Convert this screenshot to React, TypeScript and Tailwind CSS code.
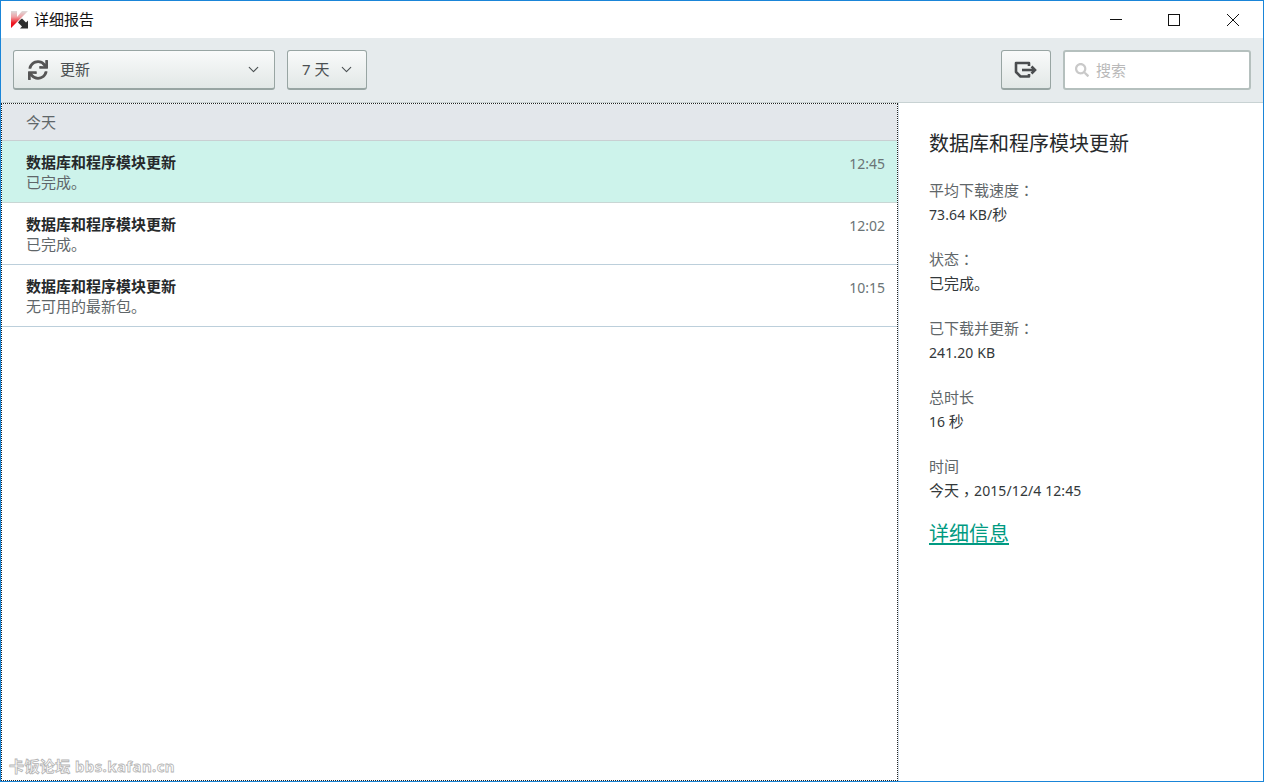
import { ChevronDown } from "lucide-react";
import { FaSearch, FaSync } from "react-icons/fa";

const fontStack = "font-['Noto_Sans','Noto_Sans_CJK_SC',sans-serif]";
const buttonClass =
  "flex items-center rounded-[3px] border border-[#98a5a3] border-b-2 bg-gradient-to-b from-[#f9fafa] to-[#e2e8e7] text-[#4b5052]";

const rows = [
  { title: "数据库和程序模块更新", status: "已完成。", time: "12:45", active: true },
  { title: "数据库和程序模块更新", status: "已完成。", time: "12:02", active: false },
  { title: "数据库和程序模块更新", status: "无可用的最新包。", time: "10:15", active: false },
];

// the colon and comma sit centred in their cell in the original, which the TC glyphs do
const Colon = () => <span className="font-['Noto_Sans_CJK_TC',sans-serif]">：</span>;
const Comma = () => <span className="align-[-4px] font-['Noto_Sans_CJK_TC',sans-serif] leading-none">，</span>;

const details = [
  { label: <>平均下载速度<Colon /></>, value: <><span className="text-sm tracking-[0.1px]">73.64 KB/</span>秒</> },
  { label: <>状态<Colon /></>, value: <>已完成。</> },
  { label: <>已下载并更新<Colon /></>, value: <span className="text-sm tracking-[0.1px]">241.20 KB</span> },
  { label: <>总时长</>, value: <><span className="text-sm">16 </span>秒</> },
  { label: <>时间</>, value: <>今天<Comma /><span className="text-sm tracking-[0.1px]">2015/12/4 12:45</span></> },
];

function Logo() {
  return (
    <svg width="18" height="18" viewBox="0 0 18 18">
      <defs>
        <linearGradient id="k" x1="0" y1="0" x2="0" y2="1">
          <stop offset="0" stopColor="#dcdcdc" />
          <stop offset="0.35" stopColor="#f0a0a4" />
          <stop offset="0.7" stopColor="#ee1c25" />
          <stop offset="1" stopColor="#e8000f" />
        </linearGradient>
      </defs>
      <path d="M0 0h6v6l5-6h6l-7 7-4 4-6 6z" fill="url(#k)" />
      <path d="M9 9l2-1.500 4 4 2-2v8h-8l2-2-4-4z" fill="#2e2e2e" />
    </svg>
  );
}

function ExportIcon() {
  return (
    <svg width="24" height="18" viewBox="0 0 24 18" fill="none" stroke="#4a4d4f" strokeWidth="2.6">
      <path d="M15 5V2H2v9l4.500 4.500H15V13" strokeLinejoin="round" />
      <path d="M8 9h13" />
      <path d="M17.500 5.500 21 9l-3.500 3.500" />
    </svg>
  );
}

export default function App() {
  return (
    <div className={`${fontStack} relative flex h-[782px] w-[1264px] flex-col overflow-hidden border border-[#1a85d8] bg-white`}>
      <header className="flex h-[37px] shrink-0 items-center bg-white pl-[10px]">
        <Logo />
        <span className="ml-[5px] text-[15px] text-[#111]">详细报告</span>
        <div className="ml-auto flex items-center text-[#111]">
          <button className="flex w-[58px] justify-center">
            <svg width="12" height="12" viewBox="0 0 12 12" stroke="currentColor"><path d="M0 5.500h12" /></svg>
          </button>
          <button className="flex w-[58px] justify-center">
            <svg width="12" height="12" viewBox="0 0 12 12" fill="none" stroke="currentColor"><rect x="0.500" y="0.500" width="11" height="11" /></svg>
          </button>
          <button className="flex w-[60px] justify-center">
            <svg width="12" height="12" viewBox="0 0 12 12" stroke="currentColor"><path d="M0 0l12 12M12 0 0 12" /></svg>
          </button>
        </div>
      </header>

      <div className="flex h-[65px] shrink-0 items-center border-b border-[#c8d2d3] bg-[#e6ebed] pl-3 pr-3">
        <button className={`${buttonClass} h-[40px] w-[262px] pl-[14px] pr-[12px] text-[15px]`}>
          <FaSync size={20} color="#555" />
          <span className="ml-[12px]">更新</span>
          <ChevronDown size={17} strokeWidth={1.5} className="ml-auto" />
        </button>
        <button className={`${buttonClass} ml-3 h-[40px] w-[80px] pl-[14px] text-[15px]`}>
          <span>7 天</span>
          <ChevronDown size={17} strokeWidth={1.5} className="ml-[9px]" />
        </button>
        <button className={`${buttonClass} ml-auto h-[40px] w-[50px] justify-center`}>
          <ExportIcon />
        </button>
        <div className="ml-3 flex h-[40px] w-[188px] items-center rounded-[3px] border-2 border-[#b5c0be] bg-white pl-[10px]">
          <FaSearch size={14} color="#c9c9c9" />
          <span className="ml-[7px] text-[15px] text-[#b9b9b9]">搜索</span>
        </div>
      </div>

      <div className="flex min-h-0 flex-1">
        <div className="w-[897px] border border-dotted border-[#222]">
          <div className="flex h-[37px] items-center border-b border-[#c9cfd2] bg-[#e3e7eb] pl-6 pt-[1px] text-[15px] text-[#5f6669]">今天</div>
          {rows.map((row, i) => (
            <div
              key={i}
              className={`flex h-[62px] justify-between border-b pl-6 pr-3 pt-[11px] ${
                row.active ? "border-[#c9d6d4] bg-[#cdf3eb]" : "border-[#bccfdb] bg-white"
              }`}
            >
              <div className="text-[15px] leading-[20px]">
                <div className="font-bold text-[#26292b]">{row.title}</div>
                <div className="text-[#5f6669]">{row.status}</div>
              </div>
              <div className="text-sm leading-[24px] text-[#6b7476]">{row.time}</div>
            </div>
          ))}
        </div>

        <aside className="flex-1 border-l border-[#d5e0e8] pl-[30px] pt-[26px]">
          <h2 className="text-[20px] leading-[30px] text-[#26292b]">数据库和程序模块更新</h2>
          <div className="mt-[19px] flex flex-col gap-[21px]">
            {details.map((item, i) => (
              <div key={i} className="text-[15px] leading-[24px]">
                <div className="text-[#5f6669]">{item.label}</div>
                <div className="text-[#33383a]">{item.value}</div>
              </div>
            ))}
          </div>
          <a href="#" className="mt-[17px] block text-[20px] leading-[30px] text-[#009a82] underline underline-offset-2">详细信息</a>
        </aside>
      </div>

      <div className="absolute bottom-[5px] left-[8px] text-[15px] font-bold leading-[20px] tracking-[0.4px] text-white [-webkit-text-stroke:0.8px_#b4b4b4]">
        卡饭论坛 bbs.kafan.cn
      </div>
    </div>
  );
}
